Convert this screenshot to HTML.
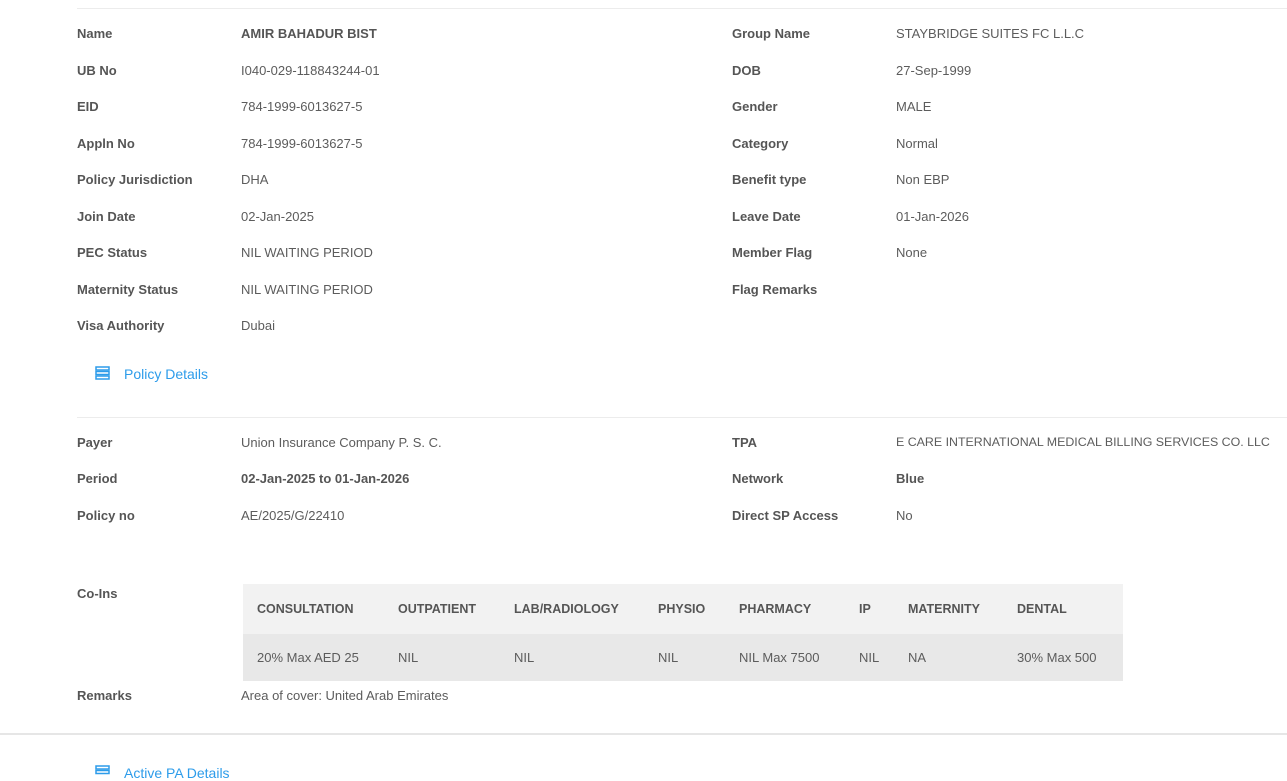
<!DOCTYPE html>
<html><head><style>
body{margin:0;width:1287px;height:771px;overflow:hidden;background:#fff;font-family:"Liberation Sans",sans-serif;font-size:13px;color:#5c5c5c;position:relative}
.a{position:absolute;white-space:nowrap}
.l{font-weight:bold;color:#555}
.hr{position:absolute;height:1px;background:#ececec}
.lnk{color:#2d9cea;font-size:14px}
table{position:absolute;left:243px;top:584px;width:880px;border-collapse:collapse}
th{background:#f2f2f2;height:50px;text-align:left;font-weight:bold;font-size:12.5px;color:#555;padding:0 0 0 14px}
td{background:#e8e8e8;height:47px;text-align:left;padding:0 0 0 14px;color:#5c5c5c;font-size:13px}
</style></head><body>
<div class="hr" style="left:77px;right:0;top:8px"></div>
<div class="hr" style="left:77px;right:0;top:417px"></div>
<div class="hr" style="left:0;right:0;top:733px;background:#e6e6e6;height:2px"></div>

<div class="a l" style="left:77px;top:26px">Name</div><div class="a l" style="left:241px;top:26px">AMIR BAHADUR BIST</div>
<div class="a l" style="left:77px;top:63px">UB No</div><div class="a" style="left:241px;top:63px">I040-029-118843244-01</div>
<div class="a l" style="left:77px;top:99px">EID</div><div class="a" style="left:241px;top:99px">784-1999-6013627-5</div>
<div class="a l" style="left:77px;top:136px">Appln No</div><div class="a" style="left:241px;top:136px">784-1999-6013627-5</div>
<div class="a l" style="left:77px;top:172px">Policy Jurisdiction</div><div class="a" style="left:241px;top:172px">DHA</div>
<div class="a l" style="left:77px;top:209px">Join Date</div><div class="a" style="left:241px;top:209px">02-Jan-2025</div>
<div class="a l" style="left:77px;top:245px">PEC Status</div><div class="a" style="left:241px;top:245px">NIL WAITING PERIOD</div>
<div class="a l" style="left:77px;top:282px">Maternity Status</div><div class="a" style="left:241px;top:282px">NIL WAITING PERIOD</div>
<div class="a l" style="left:77px;top:318px">Visa Authority</div><div class="a" style="left:241px;top:318px">Dubai</div>

<div class="a l" style="left:732px;top:26px">Group Name</div><div class="a" style="left:896px;top:26px">STAYBRIDGE SUITES FC L.L.C</div>
<div class="a l" style="left:732px;top:63px">DOB</div><div class="a" style="left:896px;top:63px">27-Sep-1999</div>
<div class="a l" style="left:732px;top:99px">Gender</div><div class="a" style="left:896px;top:99px">MALE</div>
<div class="a l" style="left:732px;top:136px">Category</div><div class="a" style="left:896px;top:136px">Normal</div>
<div class="a l" style="left:732px;top:172px">Benefit type</div><div class="a" style="left:896px;top:172px">Non EBP</div>
<div class="a l" style="left:732px;top:209px">Leave Date</div><div class="a" style="left:896px;top:209px">01-Jan-2026</div>
<div class="a l" style="left:732px;top:245px">Member Flag</div><div class="a" style="left:896px;top:245px">None</div>
<div class="a l" style="left:732px;top:282px">Flag Remarks</div>

<svg class="a" style="left:95px;top:366px" width="15" height="14"><g fill="none" stroke="#2d9cea" stroke-width="1.5"><rect x="1" y="1" width="13" height="3"/><rect x="1" y="5.5" width="13" height="3"/><rect x="1" y="10" width="13" height="3"/></g></svg>
<div class="a lnk" style="left:124px;top:366px">Policy Details</div>

<div class="a l" style="left:77px;top:435px">Payer</div><div class="a" style="left:241px;top:435px">Union Insurance Company P. S. C.</div>
<div class="a l" style="left:77px;top:471px">Period</div><div class="a l" style="left:241px;top:471px">02-Jan-2025 to 01-Jan-2026</div>
<div class="a l" style="left:77px;top:508px">Policy no</div><div class="a" style="left:241px;top:508px">AE/2025/G/22410</div>
<div class="a l" style="left:732px;top:435px">TPA</div><div class="a" style="left:896px;top:435px;font-size:12.4px">E CARE INTERNATIONAL MEDICAL BILLING SERVICES CO. LLC</div>
<div class="a l" style="left:732px;top:471px">Network</div><div class="a l" style="left:896px;top:471px">Blue</div>
<div class="a l" style="left:732px;top:508px">Direct SP Access</div><div class="a" style="left:896px;top:508px">No</div>

<div class="a l" style="left:77px;top:586px">Co-Ins</div>
<table>
<colgroup><col style="width:141px"><col style="width:116px"><col style="width:144px"><col style="width:81px"><col style="width:120px"><col style="width:49px"><col style="width:109px"><col></colgroup>
<tr><th>CONSULTATION</th><th>OUTPATIENT</th><th>LAB/RADIOLOGY</th><th>PHYSIO</th><th>PHARMACY</th><th>IP</th><th>MATERNITY</th><th>DENTAL</th></tr>
<tr><td>20% Max AED 25</td><td>NIL</td><td>NIL</td><td>NIL</td><td>NIL Max 7500</td><td>NIL</td><td>NA</td><td>30% Max 500</td></tr>
</table>
<div class="a l" style="left:77px;top:688px">Remarks</div><div class="a" style="left:241px;top:688px">Area of cover: United Arab Emirates</div>

<svg class="a" style="left:95px;top:765px" width="15" height="14"><g fill="none" stroke="#2d9cea" stroke-width="1.5"><rect x="1" y="1" width="13" height="3"/><rect x="1" y="5.5" width="13" height="3"/></g></svg>
<div class="a lnk" style="left:124px;top:765px">Active PA Details</div>
</body></html>
